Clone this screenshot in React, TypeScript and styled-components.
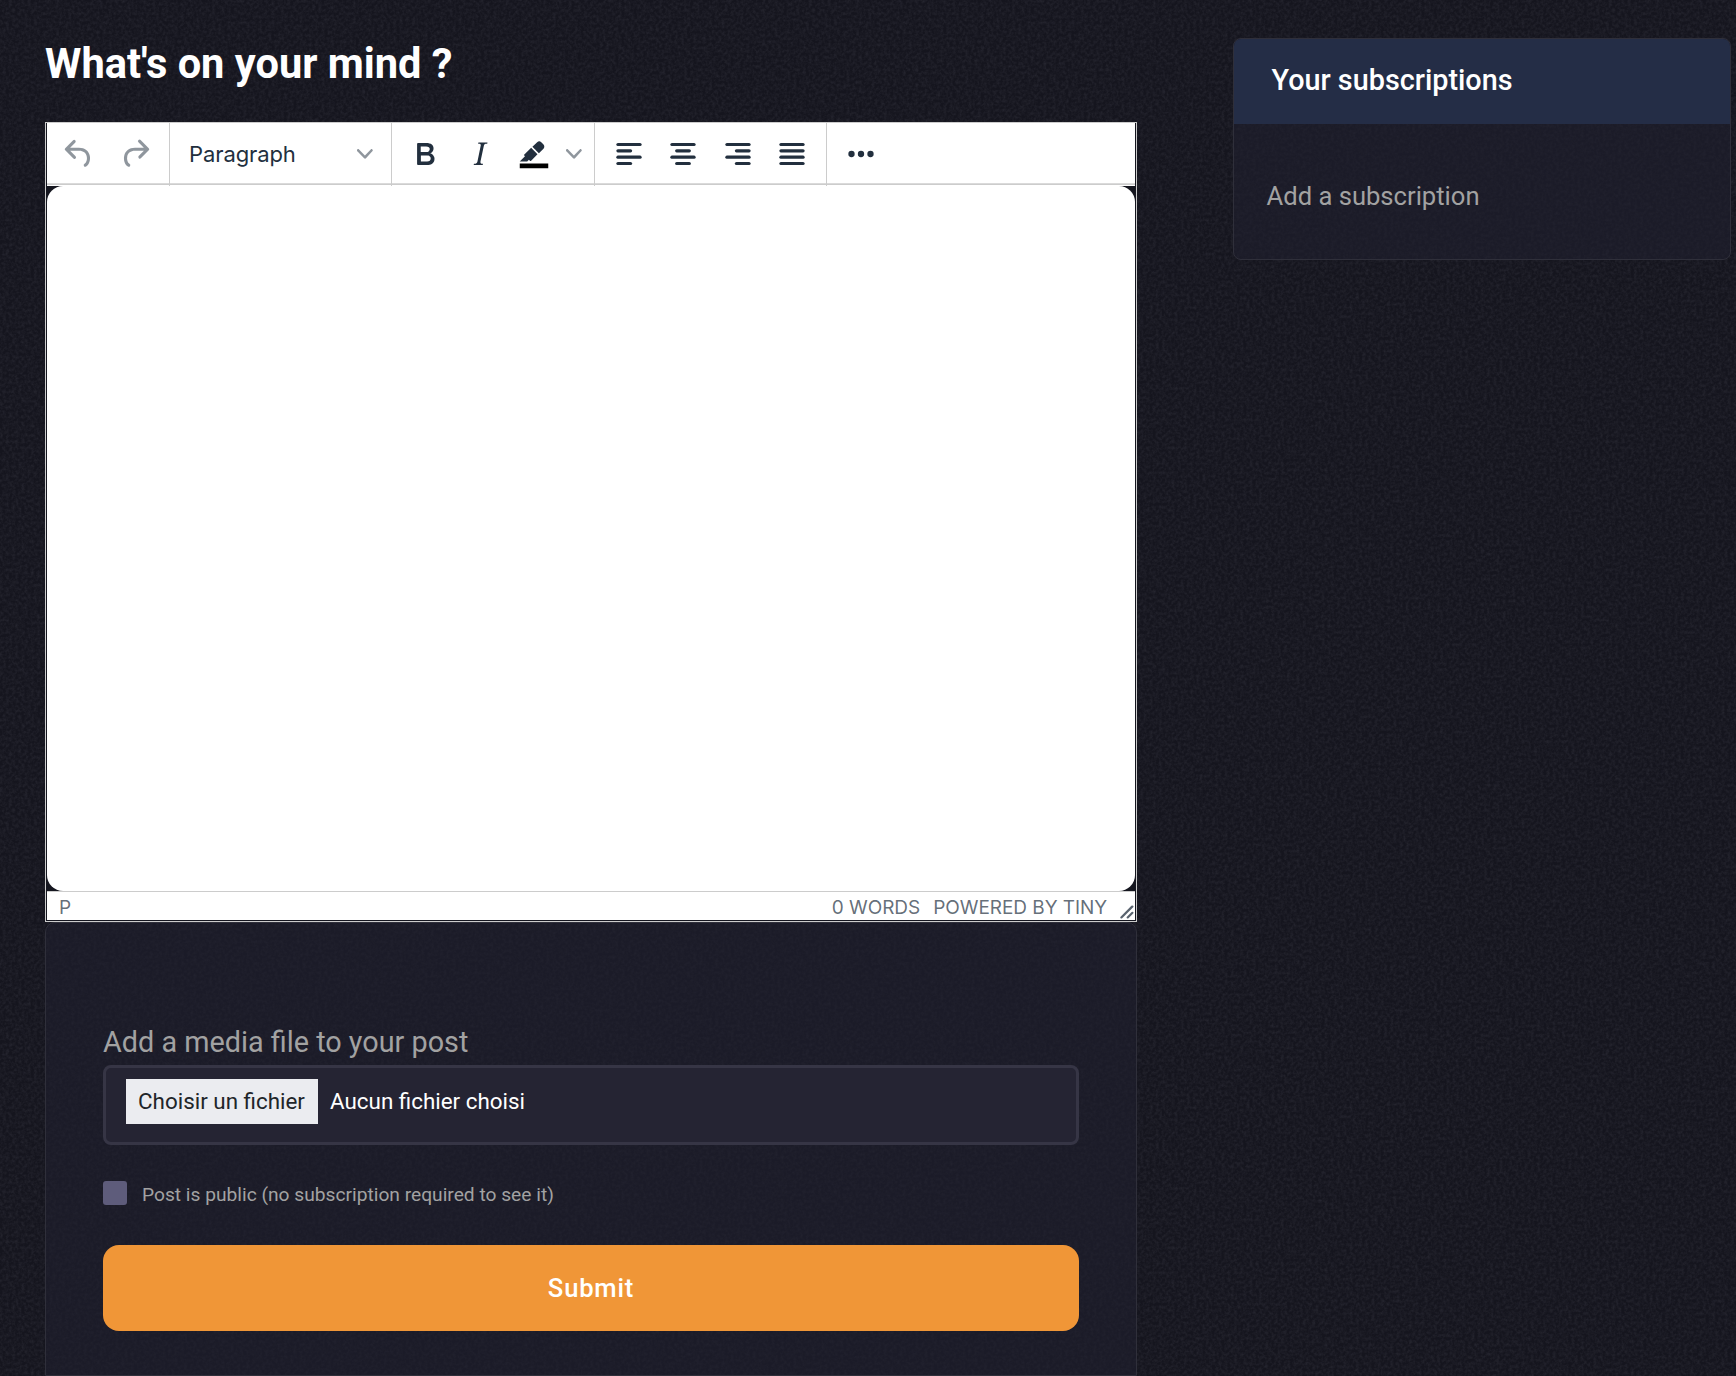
import React from "react";
import styled, { createGlobalStyle, css } from "styled-components";

const ui = css`font-family: Roboto, "Liberation Sans", sans-serif;`;
const editorFont = css`font-family: Inter, "Liberation Sans", sans-serif;`;

const GlobalStyle = createGlobalStyle`
  *, *::before, *::after { box-sizing: border-box; }
  html, body { margin: 0; background: #17171f; }
  body { overflow: hidden; }
`;

const Page = styled.main`
  ${ui}
  position: relative;
  isolation: isolate;
  display: flex;
  align-items: flex-start;
  gap: 96px;
  width: 1736px;
  height: 1376px;
  padding: 38px 5px 0 45px;
  overflow: hidden;
  color: #fff;
`;

const Grain = styled.svg`
  position: absolute;
  inset: 0;
  z-index: -1;
  width: 100%;
  height: 100%;
`;

const Composer = styled.section`
  display: flex;
  flex-direction: column;
  width: 1092px;
`;

const Title = styled.h1`
  margin: 0;
  height: 84px;
  padding-top: 1px;
  font-size: 41.6px;
  line-height: 50px;
  font-weight: 700;
  white-space: nowrap;
`;

const Editor = styled.div`
  ${editorFont}
  display: flex;
  flex-direction: column;
  height: 800px;
  padding: 0 1px 1px;
  border: 1px solid #ccc;
  background: #15161f;
  color: #222f3e;
`;

const Toolbar = styled.div`
  display: flex;
  height: 63px;
  flex: none;
  background: linear-gradient(#fff 60px, #dadada 60px, #dadada 61px, #ccc 61px, #ccc 62px, #fff 62px);
`;

const Group = styled.div<{ $width?: number; $inset?: number; $last?: boolean }>`
  display: flex;
  flex: none;
  width: ${(p) => (p.$width ? `${p.$width}px` : "auto")};
  padding-left: ${(p) => p.$inset ?? 7}px;
  border-right: ${(p) => (p.$last ? "0" : "1px solid #ccc")};
`;

const ToolButton = styled.button<{ $dim?: boolean }>`
  display: flex;
  flex: none;
  align-items: center;
  justify-content: center;
  width: 54.3px;
  height: 62px;
  padding: 0;
  border: 0;
  background: none;
  color: #222f3e;
  opacity: ${(p) => (p.$dim ? 0.5 : 1)};
`;

const WideToolButton = styled(ToolButton)`
  width: 56px;
`;

const ToolIcon = styled.svg`
  width: 38px;
  height: 38px;
  fill: currentColor;
`;

const ChevronIcon = styled.svg`
  width: 15.8px;
  height: 15.8px;
  fill: #222f3e;
  opacity: 0.5;
`;

const ChevronButton = styled(ToolButton)`
  width: 26px;
`;

const FormatSelect = styled.button`
  ${editorFont}
  display: flex;
  align-items: center;
  justify-content: space-between;
  width: 214px;
  height: 62px;
  padding: 0 18px 0 12px;
  border: 0;
  background: none;
  color: #222f3e;
  font-size: 22px;
`;

const FormatLabel = styled.span`
  letter-spacing: -0.1px;
`;

const Writing = styled.div`
  height: 705px;
  flex: none;
  border-radius: 16px;
  background: #fff;
`;

const StatusBar = styled.div`
  display: flex;
  flex: none;
  gap: 13px;
  height: 29px;
  padding: 0 0 0 12px;
  border-top: 1px solid #ccc;
  background: #fff;
  color: rgba(34, 47, 62, 0.7);
  font-size: 19px;
  line-height: 32px;
  letter-spacing: -0.05px;
  white-space: nowrap;
`;

const StatusPath = styled.span`
  flex: 1;
`;

const ResizeIcon = styled.svg`
  align-self: flex-end;
  width: 15.8px;
  height: 15.8px;
  margin-left: -1px;
  fill: #222f3e;
  opacity: 0.75;
`;

const Form = styled.form`
  display: flex;
  flex-direction: column;
  align-items: stretch;
  height: 454px;
  padding: 102px 57px 0;
  border: 1px solid #2f2f3a;
  border-radius: 10px 10px 0 0;
  background: rgba(32, 32, 46, 0.6);
`;

const FieldLabel = styled.label`
  height: 40px;
  color: #a2a2a2;
  font-size: 28.8px;
  line-height: 34px;
`;

const FileField = styled.div`
  display: flex;
  align-items: flex-start;
  gap: 12px;
  height: 80px;
  padding: 11px 20px;
  border: 3px solid #363545;
  border-radius: 8px;
  background: #252433;
  font-size: 22.4px;
  line-height: 45px;
`;

const FileButton = styled.button`
  ${ui}
  width: 192px;
  height: 45px;
  padding: 0 1px 0 0;
  border: 0;
  background: #ebecf0;
  color: #212529;
  font-size: 22.4px;
  line-height: 45px;
`;

const CheckRow = styled.div`
  display: flex;
  align-items: center;
  gap: 15px;
  height: 24px;
  margin-top: 36px;
  color: #a2a2a2;
  font-size: 19.2px;
`;

const CheckBox = styled.span`
  width: 24px;
  height: 24px;
  border-radius: 3px;
  background: #5e5c7b;
`;

const CheckText = styled.span`
  padding-top: 3px;
`;

const Submit = styled.button`
  ${ui}
  height: 86px;
  margin-top: 40px;
  border: 0;
  border-radius: 16px;
  background: #f09637;
  color: #fff;
  font-size: 25.6px;
  font-weight: 500;
  letter-spacing: 0.8px;
`;

const Card = styled.aside`
  width: 498px;
  height: 222px;
  border: 1px solid #2f2f3a;
  border-radius: 8px;
  background: rgba(32, 32, 46, 0.6);
  overflow: hidden;
`;

const CardHeader = styled.h2`
  height: 86px;
  margin: -1px -1px 0;
  padding-left: 38.5px;
  background: #242d46;
  font-size: 28.8px;
  line-height: 85px;
  font-weight: 500;
`;

const CardLink = styled.a`
  display: block;
  padding: 56px 0 0 32.5px;
  color: #a2a2a2;
  font-size: 25.6px;
  line-height: 32px;
`;

const paths = {
  undo: "M6.4 8H12c3.7 0 6.2 2 6.8 5.1.6 2.7-.4 5.6-2.3 6.8a1 1 0 0 1-1-1.8c1.1-.6 1.8-2.7 1.4-4.6-.5-2.1-2.1-3.5-4.9-3.5H6.4l3.3 3.3a1 1 0 1 1-1.4 1.4l-5-5a1 1 0 0 1 0-1.4l5-5a1 1 0 0 1 1.4 1.4L6.4 8Z",
  redo: "M17.6 10H12c-2.8 0-4.4 1.4-4.9 3.5-.4 2 .3 4 1.4 4.6a1 1 0 1 1-1 1.8c-2-1.2-2.9-4.1-2.3-6.8.6-3 3-5.1 6.8-5.1h5.6l-3.3-3.3a1 1 0 1 1 1.4-1.4l5 5a1 1 0 0 1 0 1.4l-5 5a1 1 0 0 1-1.4-1.4l3.3-3.3Z",
  bold: "M7.8 19c-.3 0-.5 0-.6-.2l-.2-.5V5.7c0-.2 0-.4.2-.5l.6-.2h5c1.5 0 2.7.3 3.5 1 .7.6 1.1 1.4 1.1 2.5a3 3 0 0 1-.6 1.9c-.4.6-1 1-1.6 1.2.4.1.9.3 1.3.6s.8.7 1 1.2c.4.4.5 1 .5 1.6 0 1.3-.4 2.3-1.3 3-.8.7-2.1 1-3.8 1H7.8Zm5-8.3c.6 0 1.2-.1 1.6-.5.4-.3.6-.7.6-1.3 0-1.1-.8-1.7-2.3-1.7H9.3v3.5h3.4Zm.5 6c.7 0 1.3-.1 1.7-.4.4-.4.6-.9.6-1.5s-.2-1-.7-1.4c-.4-.3-1-.4-2-.4H9.4v3.8h4Z",
  italic: "m16.7 4.7-.1.9h-.3c-.6 0-1 0-1.4.3-.3.3-.4.6-.5 1.1l-2.1 9.8v.6c0 .5.4.8 1.4.8h.2l-.2.8H8l.2-.8h.2c1.1 0 1.8-.5 2-1.5l2-9.8.1-.5c0-.6-.4-.8-1.4-.8h-.3l.2-.9h5.8Z",
  marker: "M7.7 16.7H3l3.3-3.3-.7-.8L10.2 8l4 4.1-4 4.2c-.2.2-.6.2-.8 0l-.6-.7-1.1 1.1zm5-7.5L11 7.4l3-2.9a2 2 0 0 1 2.6 0L18 6c.7.7.7 2 0 2.7l-2.9 2.9-1.8-1.8-.5-.6",
  chevron: "M8.7 2.2c.3-.3.8-.3 1 0 .4.4.4.9 0 1.2L5.7 7.8c-.3.3-.9.3-1.2 0L.2 3.4a.8.8 0 0 1 0-1.2c.3-.3.8-.3 1.1 0L5 6l3.7-3.8Z",
  more: "M6 10a2 2 0 1 0 0 4 2 2 0 0 0 0-4Zm12 0a2 2 0 1 0 0 4 2 2 0 0 0 0-4Zm-6 0a2 2 0 1 0 0 4 2 2 0 0 0 0-4Z",
  resize: "M8.1 1.1A.5.5 0 1 1 9 2l-7 7A.5.5 0 1 1 1 8l7-7ZM8.1 5.1A.5.5 0 1 1 9 6l-3 3A.5.5 0 1 1 5 8l3-3Z",
};

const Icon = ({ d }: { d: string }) => (
  <ToolIcon viewBox="0 0 24 24"><path d={d} /></ToolIcon>
);

const Chevron = () => (
  <ChevronIcon viewBox="0 0 10 10"><path d={paths.chevron} /></ChevronIcon>
);

/* Each alignment icon is four rows, given as [x, width]. */
const alignments: Record<string, [number, number][]> = {
  left: [[4, 16], [4, 10], [4, 16], [4, 10]],
  center: [[4, 16], [7, 10], [4, 16], [7, 10]],
  right: [[4, 16], [10, 10], [4, 16], [10, 10]],
  justify: [[4, 16], [4, 16], [4, 16], [4, 16]],
};

export default function App() {
  return (
    <>
      <GlobalStyle />
      <Page>
        <Grain aria-hidden="true">
          <filter id="grain" x="0" y="0" width="100%" height="100%">
            <feTurbulence type="fractalNoise" baseFrequency="0.32" numOctaves={3} seed={4} />
            <feColorMatrix values="0 0 0 0 0.19  0 0 0 0 0.19  0 0 0 0 0.24  0.9 0 0 0 -0.3" />
          </filter>
          <rect width="100%" height="100%" fill="#15151e" />
          <rect width="100%" height="100%" filter="url(#grain)" opacity="0.3" />
        </Grain>
        <Composer>
          <Title>What's on your mind ?</Title>
          <Editor>
            <Toolbar>
              <Group $width={123} $inset={4.4}>
                <WideToolButton $dim aria-label="Undo"><Icon d={paths.undo} /></WideToolButton>
                <WideToolButton $dim aria-label="Redo"><Icon d={paths.redo} /></WideToolButton>
              </Group>
              <Group $width={222}>
                <FormatSelect>
                  <FormatLabel>Paragraph</FormatLabel>
                  <Chevron />
                </FormatSelect>
              </Group>
              <Group $width={203} $inset={6.3}>
                <ToolButton aria-label="Bold"><Icon d={paths.bold} /></ToolButton>
                <ToolButton aria-label="Italic"><Icon d={paths.italic} /></ToolButton>
                <ToolButton aria-label="Background color">
                  <ToolIcon viewBox="0 0 24 24">
                    <path d="M3 18h18v3H3z" fill="#000" />
                    <path d={paths.marker} />
                  </ToolIcon>
                </ToolButton>
                <ChevronButton aria-label="Color menu"><Chevron /></ChevronButton>
              </Group>
              <Group $width={232}>
                {Object.entries(alignments).map(([name, rows]) => (
                  <ToolButton key={name} aria-label={`Align ${name}`}>
                    <ToolIcon viewBox="0 0 24 24">
                      {rows.map(([x, w], i) => (
                        <rect key={i} x={x} y={5 + i * 4} width={w} height={2} rx={1} />
                      ))}
                    </ToolIcon>
                  </ToolButton>
                ))}
              </Group>
              <Group $last>
                <ToolButton aria-label="More"><Icon d={paths.more} /></ToolButton>
              </Group>
            </Toolbar>
            <Writing />
            <StatusBar>
              <StatusPath>P</StatusPath>
              <span>0 WORDS</span>
              <span>POWERED BY TINY</span>
              <ResizeIcon viewBox="0 0 10 10"><path d={paths.resize} /></ResizeIcon>
            </StatusBar>
          </Editor>
          <Form>
            <FieldLabel>Add a media file to your post</FieldLabel>
            <FileField>
              <FileButton type="button">Choisir un fichier</FileButton>
              <span>Aucun fichier choisi</span>
            </FileField>
            <CheckRow>
              <CheckBox />
              <CheckText>Post is public (no subscription required to see it)</CheckText>
            </CheckRow>
            <Submit type="button">Submit</Submit>
          </Form>
        </Composer>
        <Card>
          <CardHeader>Your subscriptions</CardHeader>
          <CardLink>Add a subscription</CardLink>
        </Card>
      </Page>
    </>
  );
}
